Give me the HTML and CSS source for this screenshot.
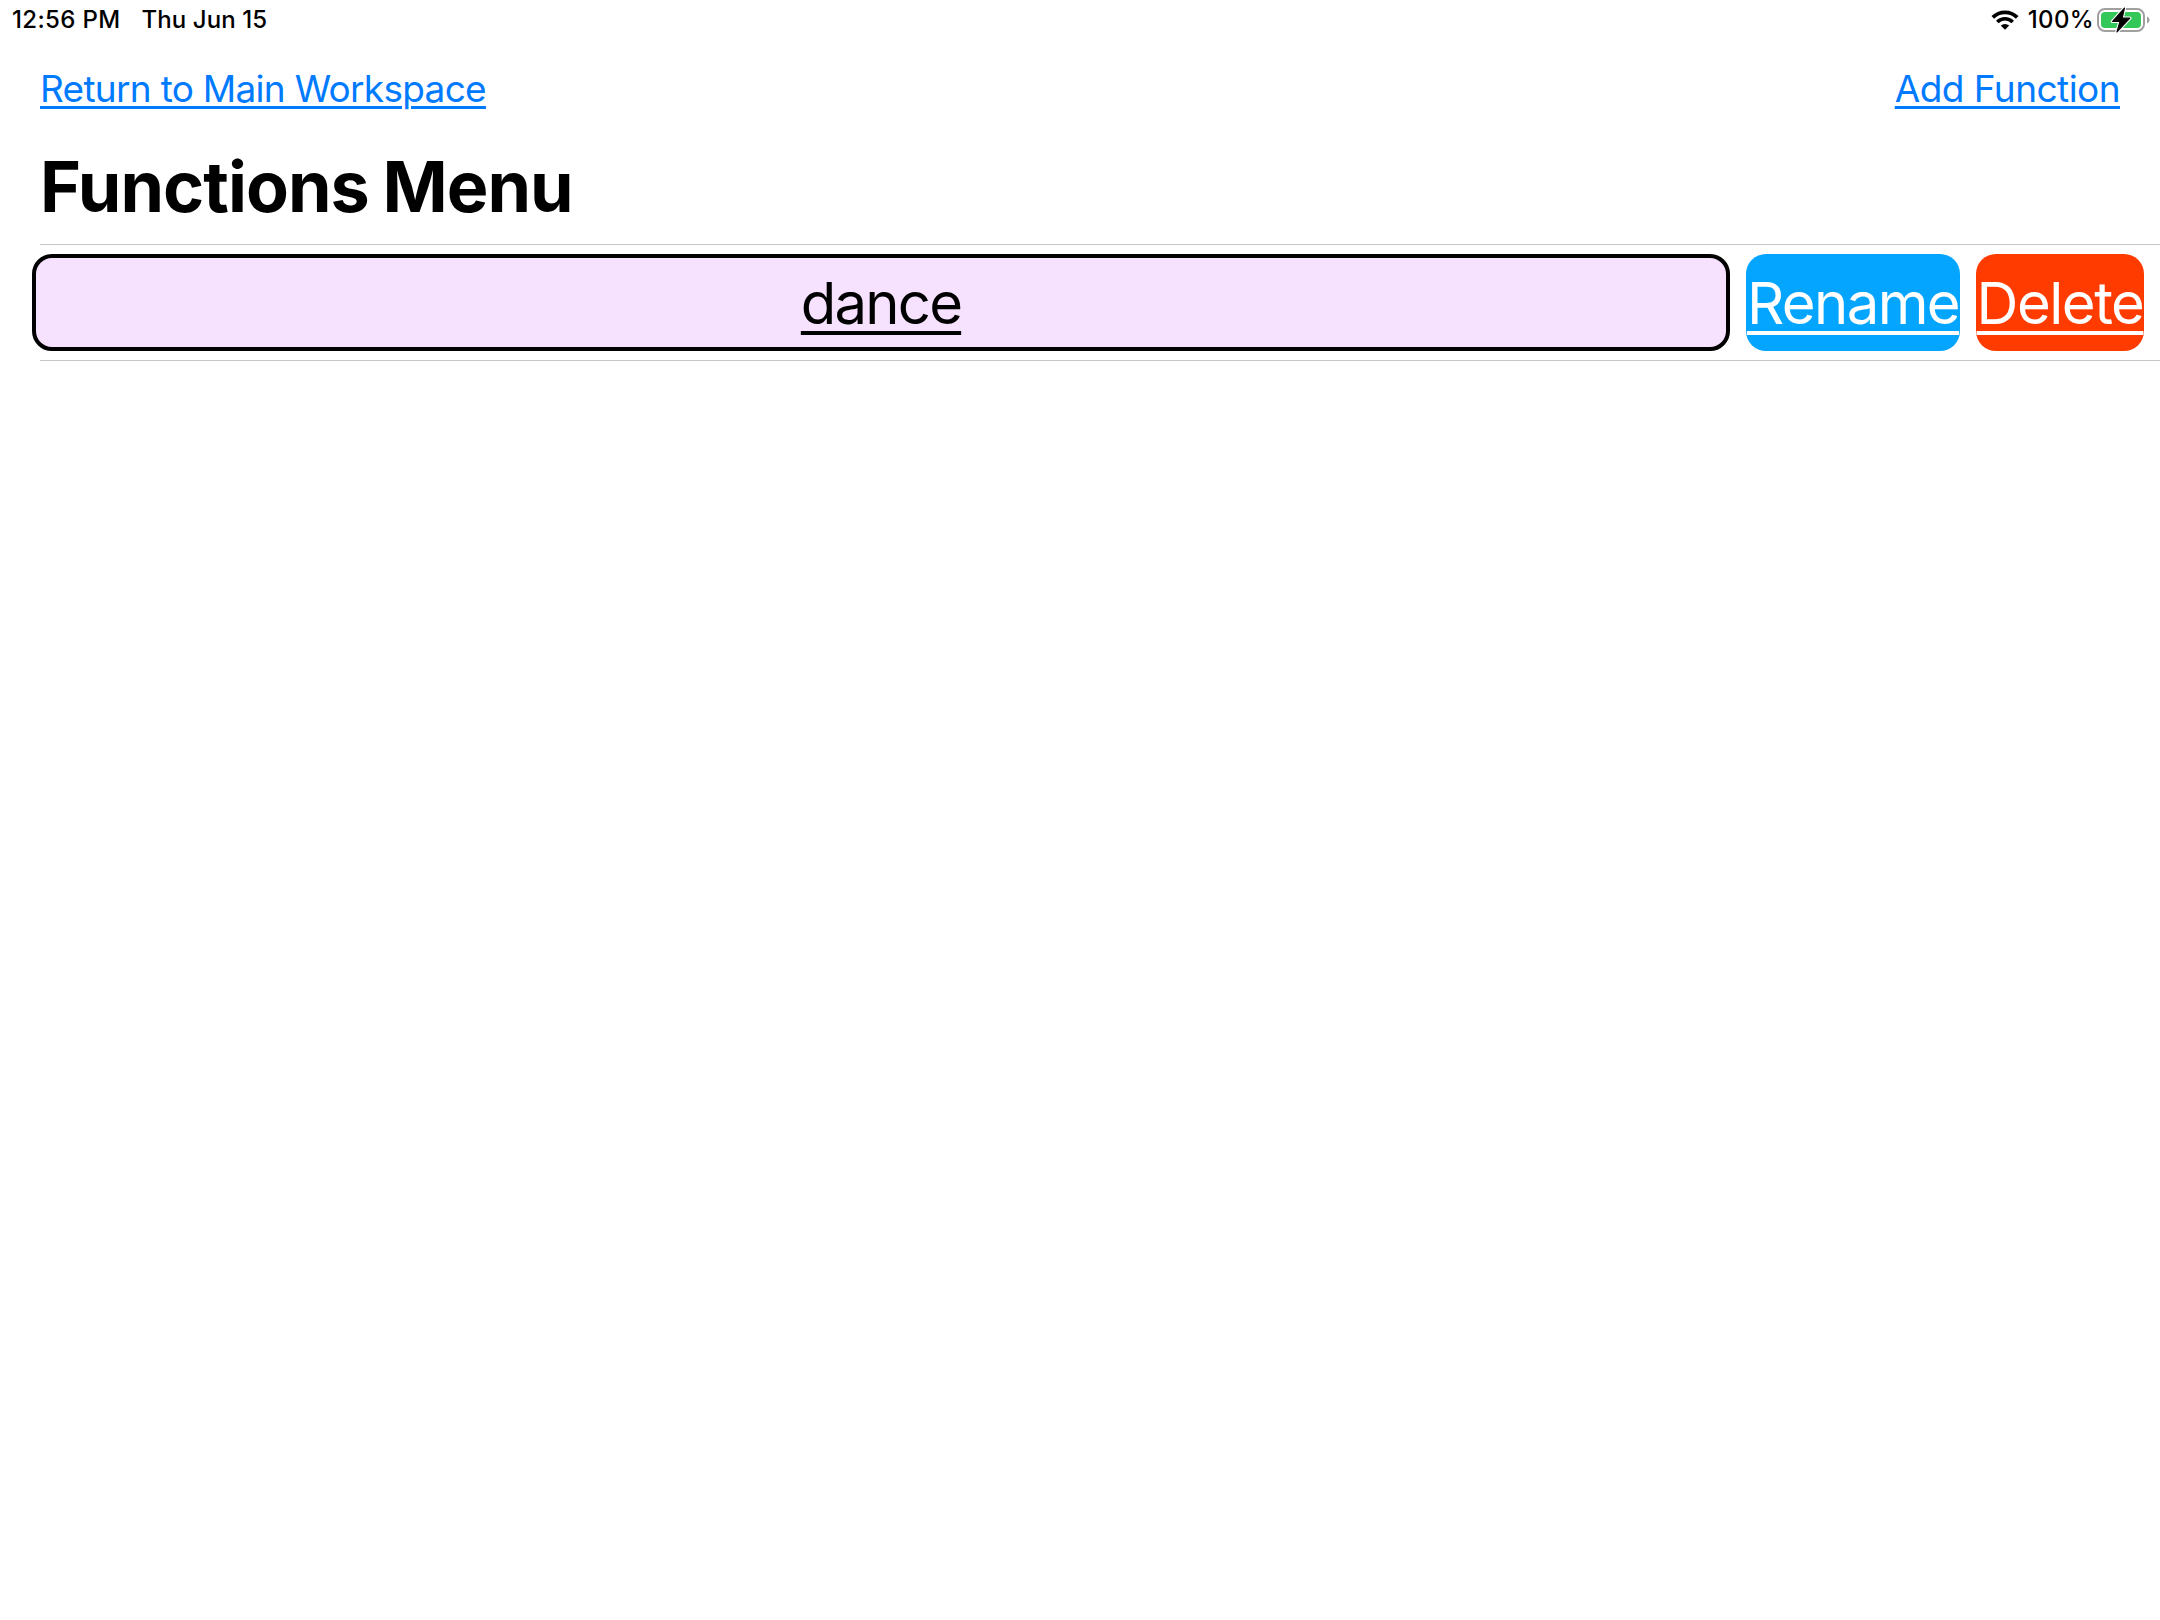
FILE: index.html
```html
<!DOCTYPE html>
<html lang="en">
<head>
<meta charset="utf-8">
<title>Functions Menu</title>
<link rel="stylesheet" href="styles.css">
</head>
<body>
<header class="status">
  <span class="time">12:56 PM</span>
  <span class="date">Thu Jun 15</span>
  <svg class="wifi" viewBox="0 0 28 20" width="28" height="20">
    <path d="M1.8 7.4A17.3 17.3 0 0 1 26.2 7.4" fill="none" stroke="#000" stroke-width="3.8"/>
    <path d="M6.3 12A10.9 10.9 0 0 1 21.7 12" fill="none" stroke="#000" stroke-width="3.6"/>
    <path d="M9.8 15.6A6.2 6.2 0 0 1 18.2 15.6L14 19.8Z"/>
  </svg>
  <span class="percent">100%</span>
  <svg class="battery" viewBox="0 0 54 26" width="54" height="26">
    <rect x="1" y="2" width="46" height="22" rx="7" fill="none" stroke="#a0a0a0" stroke-width="2"/>
    <rect x="4" y="5" width="40" height="16" rx="4" fill="#34c759"/>
    <path d="M50 9.5Q52.6 10.4 52.6 13T50 16.5Z" fill="#a0a0a0"/>
    <path d="M27.4 1.2L15.6 14.4H23L20 24.8L32.8 11.2H25.2Z" stroke="#fff" stroke-width="3.4" stroke-linejoin="round"/>
    <path d="M27.4 1.2L15.6 14.4H23L20 24.8L32.8 11.2H25.2Z" stroke="#000" stroke-width="1.2" stroke-linejoin="round"/>
  </svg>
</header>
<nav class="nav">
  <a class="link back">Return to Main Workspace</a>
  <a class="link add">Add Function</a>
</nav>
<h1 class="title">Functions Menu</h1>
<main class="list">
  <div class="row">
    <button class="cell name">dance</button>
    <button class="cell rename">Rename</button>
    <button class="cell delete">Delete</button>
  </div>
</main>
</body>
</html>
```
FILE: styles.css
```css
* { box-sizing: border-box; }
body {
  margin: 0;
  background: #fff;
  color: #000;
  font-family: Inter, "Liberation Sans", sans-serif;
}
.status {
  display: flex;
  align-items: center;
  height: 39px;
  padding: 0 9px 0 12px;
  font-size: 24px;
  font-weight: 500;
  letter-spacing: .35px;
  white-space: nowrap;
}
.date { margin-left: 21px; letter-spacing: .1px; }
.wifi { margin-left: auto; }
.percent { margin-left: 9px; }
.battery { margin-left: 3px; }
.nav {
  display: flex;
  justify-content: space-between;
  align-items: center;
  height: 99px;
  padding: 0 40px;
}
.link {
  color: #007aff;
  font-size: 37px;
  text-decoration: underline;
  text-decoration-thickness: 3px;
  text-underline-offset: 4px;
}
.back { letter-spacing: -.71px; }
.add { letter-spacing: -.55px; }
.title {
  margin: 0;
  height: 106px;
  padding-left: 40px;
  font-size: 70px;
  font-weight: 700;
  line-height: 97px;
  letter-spacing: -.95px;
  word-spacing: -2px;
}
.row {
  display: flex;
  gap: 16px;
  height: 117px;
  padding: 10px 16px 10px 32px;
  background: linear-gradient(#c6c6c8, #c6c6c8) 40px 0 / 100% 1px no-repeat,
              linear-gradient(#c6c6c8, #c6c6c8) 40px 100% / 100% 1px no-repeat;
}
.cell {
  display: flex;
  align-items: center;
  justify-content: center;
  height: 97px;
  padding: 0;
  border: 0;
  border-radius: 20px;
  color: #fff;
  font: 400 58px Inter, "Liberation Sans", sans-serif;
  text-decoration: underline;
  text-decoration-thickness: 4px;
  text-underline-offset: 7px;
  white-space: nowrap;
}
.name {
  flex: 1;
  border: 4px solid #000;
  background: #f6e2fe;
  color: #000;
  letter-spacing: -1.8px;
}
.rename { width: 214px; background: #03a5ff; letter-spacing: -1.6px; }
.delete { width: 168px; background: #ff3b00; letter-spacing: -1.5px; }
```
